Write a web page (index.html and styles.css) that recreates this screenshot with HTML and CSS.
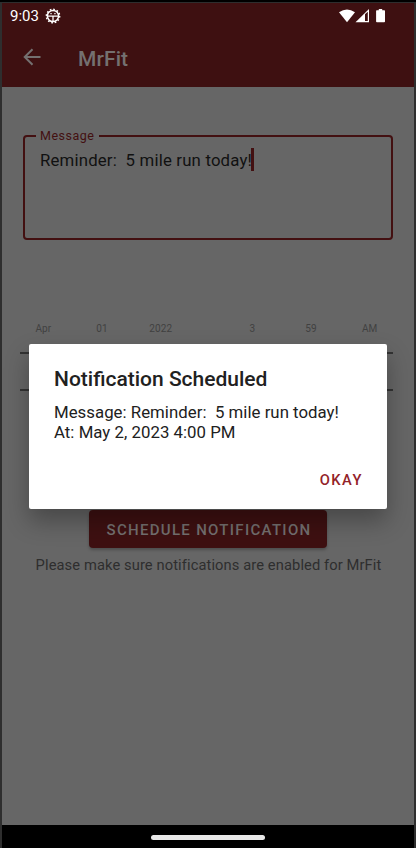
FILE: index.html
```html
<!DOCTYPE html>
<html lang="en">
<head>
<meta charset="utf-8">
<title>MrFit</title>
<link rel="stylesheet" href="styles.css">
</head>
<body>
<div class="device">
  <div class="screen">
    <header class="top">
      <div class="status">
        <span class="clock">9:03</span>
        <svg class="gear" width="16" height="16" viewBox="0 0 16 16"><circle cx="8" cy="8" r="5.6" fill="none" stroke="#fff" stroke-width="1.5"/><circle cx="8" cy="8" r="6.7" fill="none" stroke="#fff" stroke-width="1.4" stroke-dasharray="1.7 1.81"/><path d="M3 8.2h10M8 8v5M5.4 5.6h1.3M9.3 5.6h1.3" stroke="#fff" stroke-width="1.3"/></svg>
        <svg class="signals" width="48" height="14" viewBox="0 0 48 14"><path d="M0 3.2Q8 -2.2 16 3.2L8 13.2Z" fill="#fff"/><path d="M16.5 13.2L30 0V13.2Z" fill="#fff"/><path d="M26 5.2L28.8 2.8V12H26Z" fill="#3e1011"/><path d="M39.8 0h3.4v1.3h2.1q.7 0 .7.7v10.5q0 .8-.8.8h-7.3q-.8 0-.8-.8V2q0-.7.7-.7h2Z" fill="#fff"/></svg>
      </div>
      <div class="appbar">
        <svg class="back" width="18" height="18" viewBox="0 0 18 18"><path d="M17.5 9H2M9.5 1.2L1.7 9L9.5 16.8" fill="none" stroke="#747070" stroke-width="2"/></svg>
        <h1>MrFit</h1>
      </div>
    </header>
    <main>
      <fieldset class="field">
        <legend>Message</legend>
        <div class="value">Reminder:&nbsp; 5 mile run today!<i class="caret"></i></div>
      </fieldset>
      <div class="pickers">
        <div class="picker"><span>Apr</span><span>01</span><span>2022</span></div>
        <div class="picker"><span>3</span><span>59</span><span>AM</span></div>
      </div>
      <div class="selection"></div>
      <button class="schedule">SCHEDULE NOTIFICATION</button>
      <p class="hint">Please make sure notifications are enabled for MrFit</p>
    </main>
    <div class="nav"><div class="pill"></div></div>
  </div>
  <section class="dialog">
    <h2>Notification Scheduled</h2>
    <p>Message: Reminder:&nbsp; 5 mile run today!<br>At: May 2, 2023 4:00 PM</p>
    <button class="okay">OKAY</button>
  </section>
</div>
</body>
</html>
```
FILE: styles.css
```css
* { box-sizing: border-box; margin: 0; padding: 0; }
body { width: 416px; height: 848px; overflow: hidden; background: #000; font-family: Roboto, sans-serif; }
button { border: 0; font-family: inherit; }
.device { position: relative; width: 416px; height: 848px; padding: 2px 2px 0; background: #2e2e2e; border-top: 2px solid #000; }
.screen { margin-top: -1px; height: 845px; display: flex; flex-direction: column; background: #666; }
.top { height: 84px; background: #3e1011; }
.status { display: flex; height: 26px; align-items: center; padding-left: 8px; color: #fff; }
.clock { width: 35px; font-size: 15px; line-height: 18px; }
.signals { margin-left: 278px; }
.appbar { display: flex; align-items: center; height: 56px; padding-left: 21px; }
h1 { margin: 3px 0 0 37px; font-size: 21px; line-height: 24px; font-weight: 500; letter-spacing: .1px; color: #747070; }
main { flex: 1; display: flex; flex-direction: column; }
.field { width: 370px; height: 112px; margin: 41px 0 0 21px; padding: 5px 14px 0 15px; border: 2px solid #431011; border-radius: 4px; }
legend { margin-left: -4px; padding: 0 5px 0 4px; font-size: 12.5px; line-height: 15px; letter-spacing: .5px; color: #431011; }
.value { display: flex; align-items: center; font-size: 16.8px; line-height: 22px; letter-spacing: .17px; color: #111; white-space: pre; }
.caret { width: 3px; height: 23px; margin-left: -1px; background: #431011; }
.pickers { display: flex; justify-content: space-between; margin: 82px 15px 0 12px; font-size: 10px; line-height: 14px; letter-spacing: .1px; color: #414141; }
.picker { display: flex; width: 176px; }
.picker span { width: 58.8px; text-align: center; }
.selection { height: 39px; margin: 16px 21px 0 18px; border: solid #333; border-width: 2px 0; }
.schedule { align-self: center; width: 238px; height: 38px; margin-top: 119px; padding: 1px 0 0 2px; border-radius: 4px; background: #3e1011; color: #747070; font-size: 15px; font-weight: 500; letter-spacing: 1.3px; box-shadow: 0 2px 3px rgba(0,0,0,.25); }
.hint { margin-top: 8px; padding-left: 1px; text-align: center; font-size: 14.7px; line-height: 18px; letter-spacing: .1px; color: #2e2e2e; white-space: nowrap; }
.nav { height: 23px; background: #000; display: flex; justify-content: center; padding-top: 10px; }
.pill { width: 114px; height: 5px; border-radius: 3px; background: #e8e8e8; }
.dialog { position: absolute; left: 29px; top: 342px; width: 358px; height: 165px; padding: 22px 25px 0; border-radius: 2px; background: #fff; box-shadow: 0 12px 24px rgba(0,0,0,.3); color: #212121; display: flex; flex-direction: column; }
h2 { font-size: 21px; line-height: 26px; font-weight: 500; white-space: nowrap; }
.dialog p { margin-top: 10px; font-size: 16.8px; line-height: 20px; letter-spacing: .03px; white-space: nowrap; }
.okay { align-self: flex-end; margin: 29px -1px 0 0; background: none; color: #932328; font-size: 14.7px; line-height: 18px; font-weight: 500; letter-spacing: 1.5px; }
```
